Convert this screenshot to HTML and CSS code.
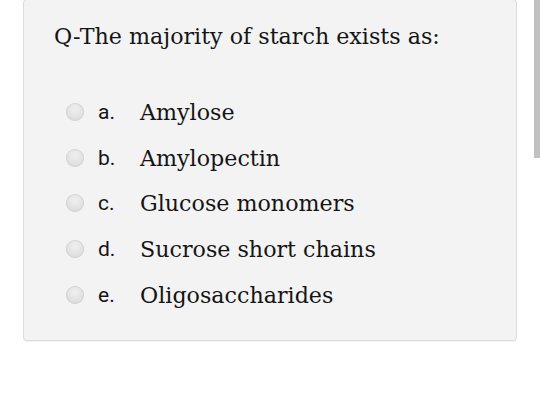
FILE: index.html
```html
<!DOCTYPE html>
<html>
<head>
<meta charset="utf-8">
<link rel="stylesheet" href="styles.css">
</head>
<body>
<div class="page">
  <div class="card">
    <div class="question">Q-The majority of starch exists as:</div>
    <div class="answers">
      <div class="answer"><span class="radio"></span><span class="letter">a.</span><span class="label">Amylose</span></div>
      <div class="answer"><span class="radio"></span><span class="letter">b.</span><span class="label">Amylopectin</span></div>
      <div class="answer"><span class="radio"></span><span class="letter">c.</span><span class="label">Glucose monomers</span></div>
      <div class="answer"><span class="radio"></span><span class="letter">d.</span><span class="label">Sucrose short chains</span></div>
      <div class="answer"><span class="radio"></span><span class="letter">e.</span><span class="label">Oligosaccharides</span></div>
    </div>
  </div>
  <div class="scrollbar"></div>
</div>
</body>
</html>
```

FILE: styles.css
```css
html, body {
  margin: 0;
  padding: 0;
  background: #ffffff;
}
.page {
  position: relative;
  width: 540px;
  height: 406px;
  overflow: hidden;
}
.card {
  margin: -1px 0 0 23px;
  width: 492px;
  height: 340px;
  box-sizing: content-box;
  background: #f3f3f3;
  border: 1px solid #dcdcdc;
  border-radius: 4px;
  box-shadow: 0 1px 1px rgba(0,0,0,0.06);
}
.question {
  padding: 21px 0 0 30px;
  font-family: "DejaVu Serif", serif;
  font-size: 22.2px;
  line-height: 30px;
  color: #151515;
}
.answers {
  display: flex;
  flex-direction: column;
  padding: 38px 0 0 42px;
}
.answer {
  display: flex;
  align-items: center;
  height: 45.75px;
}
.radio {
  width: 18px;
  height: 18px;
  border-radius: 50%;
  background: radial-gradient(circle at 50% 35%, #efefef 0%, #e2e2e2 55%, #d2d2d2 100%);
  box-shadow: inset 0 0 0 1px #d4d4d4;
  flex: none;
}
.letter {
  width: 42px;
  margin-left: 14px;
  font-family: Roboto, "Noto Sans", sans-serif;
  font-size: 21px;
  color: #151515;
}
.label {
  font-family: "DejaVu Serif", serif;
  font-size: 22.2px;
  color: #151515;
}
.scrollbar {
  position: absolute;
  top: 0;
  right: 0;
  width: 6px;
  height: 158px;
  background: #c1c1c1;
}
```
